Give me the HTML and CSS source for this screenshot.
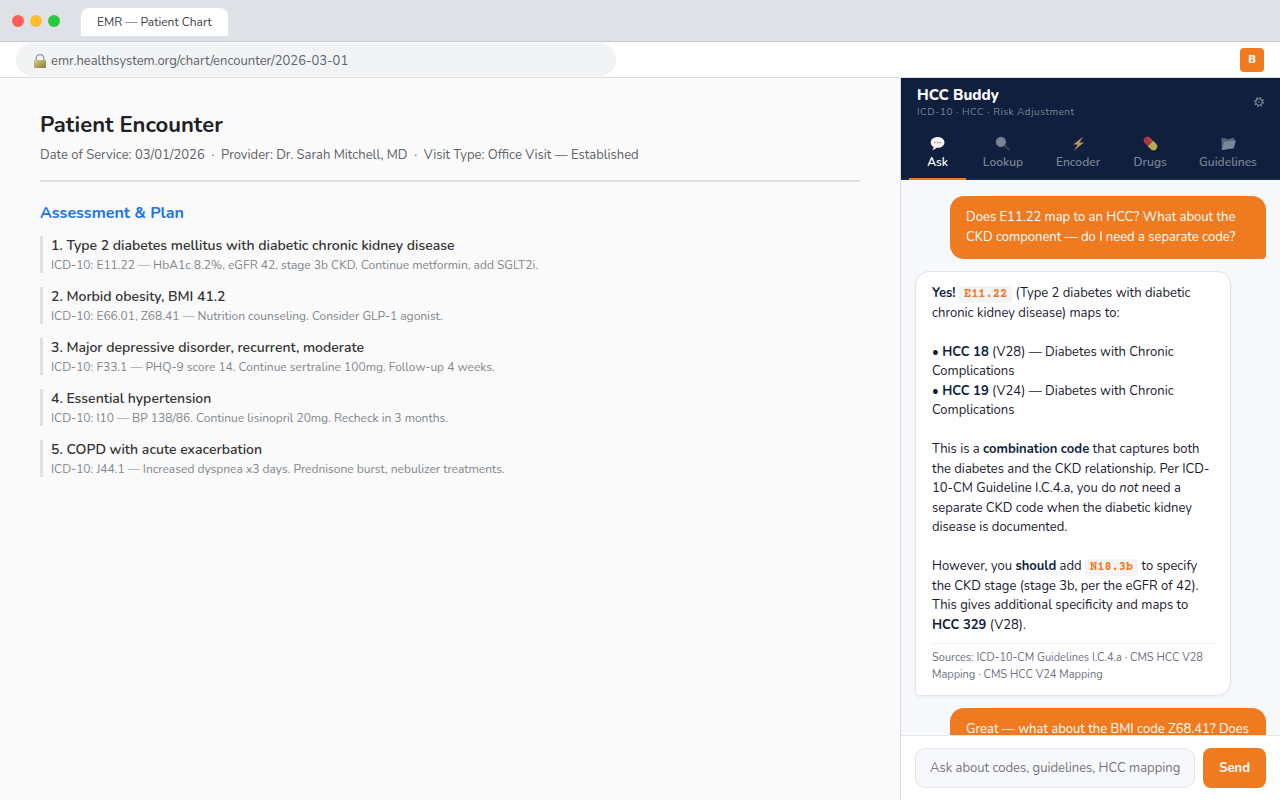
FILE: index.html
```html
<!DOCTYPE html>
<html lang="en">
<head>
  <meta charset="UTF-8">
  <title>EMR — Patient Chart</title>
  <meta name="viewport" content="width=device-width, initial-scale=1.0">
  <link rel="stylesheet" href="styles.css">
</head>
<body>
  <!-- Browser chrome -->
  <div class="titlebar">
    <div class="dots">
      <span class="dot red"></span>
      <span class="dot yellow"></span>
      <span class="dot green"></span>
    </div>
    <div class="tab">EMR — Patient Chart</div>
  </div>
  <div class="toolbar">
    <div class="url">
      <svg class="lock" viewBox="0 0 16 16" aria-hidden="true">
        <defs>
          <linearGradient id="lockBody" x1="0" y1="0" x2="1" y2="1">
            <stop offset="0" stop-color="#d9cf8c"/>
            <stop offset="1" stop-color="#857a32"/>
          </linearGradient>
        </defs>
        <path d="M4.2 7V4a3.8 3.500 0 0 1 7.600 0v3" fill="none" stroke="#98a4b0" stroke-width="1.5"/>
        <rect x="2" y="6" width="12" height="8" rx="1" fill="url(#lockBody)"/>
      </svg>
      <span>emr.healthsystem.org/chart/encounter/2026-03-01</span>
    </div>
    <button class="ext-icon" type="button">B</button>
  </div>

  <div class="content">
    <main class="chart">
      <h1>Patient Encounter</h1>
      <p class="meta">Date of Service: 03/01/2026 &nbsp;·&nbsp; Provider: Dr. Sarah Mitchell, MD &nbsp;·&nbsp; Visit Type: Office Visit — Established</p>

      <h2>Assessment &amp; Plan</h2>
      <div class="dx">
        <div class="dx-title">1. Type 2 diabetes mellitus with diabetic chronic kidney disease</div>
        <div class="dx-note">ICD-10: E11.22 — HbA1c 8.2%, eGFR 42, stage 3b CKD. Continue metformin, add SGLT2i.</div>
      </div>
      <div class="dx">
        <div class="dx-title">2. Morbid obesity, BMI 41.2</div>
        <div class="dx-note">ICD-10: E66.01, Z68.41 — Nutrition counseling. Consider GLP-1 agonist.</div>
      </div>
      <div class="dx">
        <div class="dx-title">3. Major depressive disorder, recurrent, moderate</div>
        <div class="dx-note">ICD-10: F33.1 — PHQ-9 score 14. Continue sertraline 100mg. Follow-up 4 weeks.</div>
      </div>
      <div class="dx">
        <div class="dx-title">4. Essential hypertension</div>
        <div class="dx-note">ICD-10: I10 — BP 138/86. Continue lisinopril 20mg. Recheck in 3 months.</div>
      </div>
      <div class="dx">
        <div class="dx-title">5. COPD with acute exacerbation</div>
        <div class="dx-note">ICD-10: J44.1 — Increased dyspnea x3 days. Prednisone burst, nebulizer treatments.</div>
      </div>
    </main>

    <!-- Side panel -->
    <aside class="panel">
      <header class="panel-header">
        <div>
          <div class="brand">HCC Buddy</div>
          <div class="tagline">ICD-10 · HCC · Risk Adjustment</div>
        </div>
        <button class="settings" type="button" aria-label="Settings">
          <svg viewBox="0 0 12 12" aria-hidden="true">
            <circle cx="6" cy="6" r="3.9" fill="none" stroke="currentColor" stroke-width="1.2"/>
            <circle cx="6" cy="6" r="5.2" fill="none" stroke="currentColor" stroke-width="1.4" stroke-dasharray="2.04 2.04"/>
            <circle cx="6" cy="6" r="1" fill="currentColor"/>
          </svg>
        </button>
      </header>
      <nav class="tabs">
        <button class="tab-btn active" type="button">
          <svg class="tab-icon" viewBox="0 0 16 16" aria-hidden="true">
            <path d="M8.2 1C4 1 .8 3.500.8 6.800c0 2.100 1.200 3.800 3.100 4.800-.2 1.300-.8 2.500-1.700 3.400 2-.3 3.700-1.300 4.800-2.500h1.200c4.200 0 7.200-2.500 7.200-5.700S12.400 1 8.200 1z" fill="#f4f4f4"/>
            <g fill="#555">
              <circle cx="5.2" cy="7" r=".7"/>
              <circle cx="8" cy="7" r=".7"/>
              <circle cx="10.8" cy="7" r=".7"/>
            </g>
          </svg>
          <span>Ask</span>
        </button>
        <button class="tab-btn" type="button">
          <svg class="tab-icon" viewBox="0 0 16 16" aria-hidden="true">
            <path d="M10 10l5 4.5" stroke="#4a4c50" stroke-width="2.4" stroke-linecap="round"/>
            <circle cx="6.3" cy="6.3" r="5" fill="#a9b0bc" stroke="#8b94a1" stroke-width="1.2"/>
          </svg>
          <span>Lookup</span>
        </button>
        <button class="tab-btn" type="button">
          <svg class="tab-icon" viewBox="0 0 16 16" aria-hidden="true">
            <path d="M13 .5L2.5 9h4.800L3 15.800 13.800 6.800H9z" fill="#ffc861"/>
          </svg>
          <span>Encoder</span>
        </button>
        <button class="tab-btn" type="button">
          <svg class="tab-icon" viewBox="0 0 16 16" aria-hidden="true">
            <g transform="rotate(45 8 8)">
              <path d="M8 4H3.500a4 4 0 0 0 0 8H8z" fill="#f0403c"/>
              <path d="M8 4h4.500a4 4 0 0 1 0 8H8z" fill="#ffe55c"/>
              <path d="M3 5.500h9" stroke="#fff" stroke-opacity=".4" stroke-linecap="round"/>
            </g>
          </svg>
          <span>Drugs</span>
        </button>
        <button class="tab-btn" type="button">
          <svg class="tab-icon" viewBox="0 0 16 16" aria-hidden="true">
            <path d="M.5 2.500h4.500l1 1.200 8-2v11L.8 15z" fill="#75859a"/>
            <path d="M3.500 6.200L16 4.500 13.500 13 1 15z" fill="#a5b3c5"/>
          </svg>
          <span>Guidelines</span>
        </button>
      </nav>

      <div class="messages">
        <div class="msg user">Does E11.22 map to an HCC? What about the CKD component — do I need a separate code?</div>
        <div class="msg bot">
          <strong>Yes!</strong> <code>E11.22</code> (Type 2 diabetes with diabetic chronic kidney disease) maps to:<br><br>
          • <strong>HCC 18</strong> (V28) — Diabetes with Chronic Complications<br>
          • <strong>HCC 19</strong> (V24) — Diabetes with Chronic Complications<br><br>
          This is a <strong>combination code</strong> that captures both the diabetes and the CKD relationship. Per ICD-10-CM Guideline I.C.4.a, you do <em>not</em> need a separate CKD code when the diabetic kidney disease is documented.<br><br>
          However, you <strong>should</strong> add <code>N18.3b</code> to specify the CKD stage (stage 3b, per the eGFR of 42). This gives additional specificity and maps to <strong>HCC 329</strong> (V28).
          <div class="sources">Sources: ICD-10-CM Guidelines I.C.4.a · CMS HCC V28 Mapping · CMS HCC V24 Mapping</div>
        </div>
        <div class="msg user">Great — what about the BMI code Z68.41? Does it map to an HCC?</div>
      </div>

      <form class="composer">
        <input type="text" aria-label="Question" placeholder="Ask about codes, guidelines, HCC mappings...">
        <button type="button">Send</button>
      </form>
    </aside>
  </div>
</body>
</html>
```
FILE: styles.css
```css
* {
  margin: 0;
  padding: 0;
  box-sizing: border-box;
}

body {
  font-family: Nunito, -apple-system, BlinkMacSystemFont, 'Segoe UI', system-ui, sans-serif;
  height: 100vh;
  display: flex;
  flex-direction: column;
  overflow: hidden;
  background: #fff;
}

button,
input {
  font-family: inherit;
}

button {
  border: none;
  cursor: pointer;
}

/* Browser chrome */
.titlebar {
  flex: none;
  height: 42px;
  display: flex;
  align-items: center;
  gap: 21px;
  padding: 0 12px;
  background: #dee1e6;
  border-bottom: 1px solid #c4c7cc;
}

.dots {
  display: flex;
  gap: 6px;
}

.dot {
  width: 12px;
  height: 12px;
  border-radius: 50%;
}

.dot.red {
  background: #ff5f57;
}

.dot.yellow {
  background: #ffbd2e;
}

.dot.green {
  background: #28c840;
}

.tab {
  margin-top: 3px;
  padding: 6px 16px;
  background: #fff;
  border-radius: 8px 8px 0 0;
  font-size: 12px;
  line-height: 16px;
  color: #3c4043;
}

.toolbar {
  flex: none;
  height: 36px;
  display: flex;
  align-items: center;
  justify-content: space-between;
  padding: 0 16px;
  border-bottom: 1px solid #dadce0;
}

.url {
  width: 100%;
  max-width: 600px;
  display: flex;
  align-items: center;
  gap: 3px;
  padding: 10px 16px 6px;
  background: #f1f3f4;
  border-radius: 20px;
  font-size: 13px;
  line-height: 17px;
  color: #5f6368;
}

.lock {
  width: 16px;
  height: 16px;
}

.ext-icon {
  width: 24px;
  height: 24px;
  background: #f07a1f;
  border-radius: 4px;
  color: #fff;
  font-size: 11px;
  font-weight: 800;
}

/* Chart */
.content {
  flex: 1;
  min-height: 0;
  display: flex;
}

.chart {
  flex: 1;
  padding: 32px 40px;
  background: #fafafa;
}

.chart h1 {
  margin-bottom: 6px;
  font-size: 22px;
  line-height: 30px;
  color: #202124;
}

.meta {
  padding-bottom: 16px;
  margin-bottom: 20px;
  border-bottom: 2px solid #e0e0e0;
  font-size: 13px;
  line-height: 18px;
  color: #5f6368;
}

.chart h2 {
  margin-bottom: 12px;
  font-size: 16px;
  line-height: 22px;
  color: #1a73e8;
}

.dx {
  padding-left: 8px;
  margin-bottom: 14px;
  border-left: 3px solid #e0e0e0;
}

.dx-title {
  margin-bottom: 2px;
  font-size: 14px;
  font-weight: 600;
  line-height: 19px;
  color: #333;
}

.dx-note {
  font-size: 12px;
  line-height: 16px;
  color: #80868b;
}

/* Side panel */
.panel {
  flex: none;
  width: 380px;
  display: flex;
  flex-direction: column;
  border-left: 1px solid #dadce0;
  background: #f7f8fc;
}

.panel-header {
  display: flex;
  align-items: center;
  justify-content: space-between;
  padding: 6px 16px 8px;
  background: #0f1f3d;
}

.brand {
  font-size: 15px;
  font-weight: 800;
  line-height: 22px;
  color: #fff;
}

.tagline {
  font-size: 10px;
  line-height: 12px;
  letter-spacing: 0.5px;
  color: rgba(255, 255, 255, 0.45);
}

.settings {
  padding-top: 2px;
  background: none;
  color: rgba(255, 255, 255, 0.5);
}

.settings svg {
  display: block;
  width: 10px;
  height: 10px;
  overflow: visible;
}

.tabs {
  display: flex;
  padding: 0 8px;
  background: #0f1f3d;
  border-bottom: 2px solid #1a2a4a;
}

.tab-btn {
  flex: 0 1 auto;
  min-width: 0;
  display: flex;
  flex-direction: column;
  align-items: center;
  gap: 3px;
  padding: 10px 20px 8px;
  margin-bottom: -2px;
  background: none;
  border-bottom: 2px solid transparent;
  font-size: 12px;
  font-weight: 600;
  line-height: 16px;
  color: rgba(255, 255, 255, 0.45);
}

.tab-btn.active {
  color: #fff;
  border-bottom-color: #f07a1f;
}

.tab-icon {
  flex: none;
  width: 15px;
  height: 15px;
  opacity: 0.7;
}

.tab-btn.active .tab-icon {
  opacity: 1;
}

.messages {
  flex: 1;
  min-height: 0;
  overflow: hidden;
  display: flex;
  flex-direction: column;
  gap: 12px;
  padding: 16px 14px;
}

.msg {
  flex: none;
  max-width: 90%;
  padding: 12px 16px;
  border-radius: 14px;
  font-size: 13px;
  line-height: 1.5;
}

.msg.user {
  align-self: flex-end;
  background: #f07a1f;
  border-bottom-right-radius: 4px;
  color: #fff;
}

.msg.bot {
  align-self: flex-start;
  background: #fff;
  border: 1px solid #e2e5ec;
  border-bottom-left-radius: 4px;
  box-shadow: 0 1px 3px rgba(15, 31, 61, 0.06);
  color: #1a1a2e;
}

.msg.bot strong {
  color: #0f1f3d;
}

.msg code {
  padding: 2px 5px;
  background: #f3f4f6;
  border-radius: 4px;
  font-family: 'Courier Prime', Courier, 'Liberation Mono', monospace;
  font-size: 12px;
  font-weight: 700;
  line-height: 1;
  color: #f07a1f;
}

.sources {
  margin-top: 8px;
  padding-top: 6px;
  border-top: 1px solid #f0f1f4;
  font-size: 11px;
  color: #6b7280;
}

.composer {
  flex: none;
  display: flex;
  gap: 8px;
  padding: 12px 14px;
  background: #fff;
  border-top: 1px solid #e2e5ec;
}

.composer input {
  flex: 1;
  min-width: 0;
  height: 40px;
  padding: 0 14px;
  background: #f7f8fc;
  border: 1px solid #e2e5ec;
  border-radius: 10px;
  font-size: 13px;
}

.composer button {
  padding: 0 16px;
  background: #f07a1f;
  border-radius: 8px;
  font-size: 13px;
  font-weight: 700;
  color: #fff;
}
```
